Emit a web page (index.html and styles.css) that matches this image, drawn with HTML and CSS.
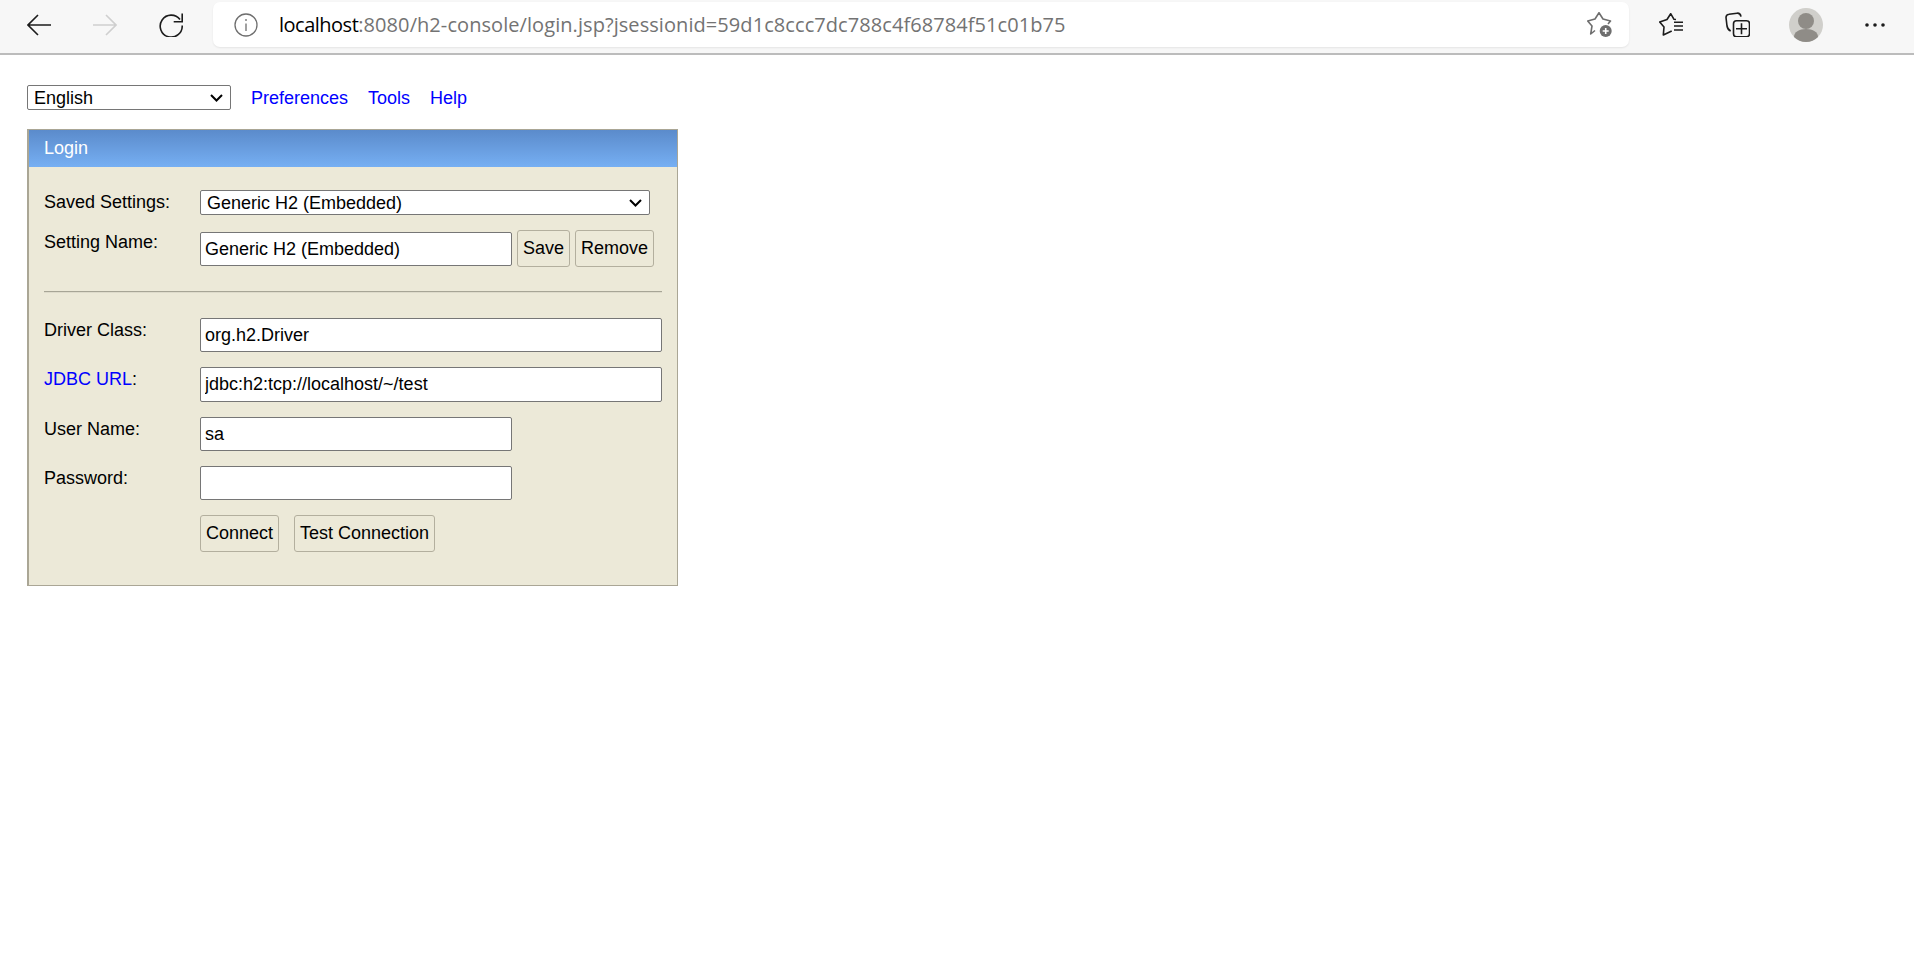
FILE: index.html
```html
<!DOCTYPE html>
<html lang="en">
<head>
<meta charset="utf-8">
<title>H2 Console</title>
<link rel="stylesheet" href="styles.css">
</head>
<body>
<header class="toolbar">
  <svg class="ico back" viewBox="0 0 24 22"><path d="M24 11H1M11 1 1 11l10 10"/></svg>
  <svg class="ico fwd" viewBox="0 0 24 22"><path d="M0 11h23M13 1l10 10-10 10"/></svg>
  <svg class="ico reload" viewBox="0 0 24 24"><path d="M21 6.500A11 11 0 1 0 23.200 12.500M23.200 .5v8.200h-8.500"/></svg>
  <div class="address">
    <svg class="info" viewBox="0 0 24 24"><circle cx="12" cy="12" r="11"/><path d="M12 10.500V18M12 6v2"/></svg>
    <span class="url"><span class="host">localhost</span>:8080/h2-console/login.jsp?jsessionid=59d1c8ccc7dc788c4f68784f51c01b75</span>
    <svg class="star-add" viewBox="0 0 26 25"><path d="M8 18.500 3.700 22 5 14 .7 9 8 7 12 .7 16 7l7.500 2-2.500 3"/><circle class="fill" cx="18.700" cy="19" r="6"/><path class="plus" d="M18.700 16v6M15.700 19h6"/></svg>
  </div>
  <svg class="ico fav" viewBox="0 0 25 24"><path class="join" d="M17 6.500 15 6.300 11.700 .7 8 6.500 .7 9 5 14 4.300 22 12.700 18M15 9.300h9M15 13h9M15 17h9"/></svg>
  <svg class="ico coll" viewBox="0 0 25 25"><path d="M5.700 19C3.500 18 2.500 17 2 14L1 5.500C1 3.500 2 2.500 4 2.300L12 1.200C14 1 15.500 2 16 4.700"/><rect x="8.500" y="8.700" width="16" height="16" rx="3"/><path d="M16.500 11.200v11M11 16.700h11"/></svg>
  <svg class="avatar" viewBox="0 0 34 34"><circle class="av-bg" cx="17" cy="17" r="17"/><circle class="av-fg" cx="17" cy="13" r="8"/><path class="av-fg" d="M5 29C5 24 10 21 17 21S29 24 29 29A17 17 0 0 1 5 29z"/></svg>
  <svg class="dots" viewBox="0 0 20 4"><circle cx="2" cy="2" r="1.800"/><circle cx="10" cy="2" r="1.800"/><circle cx="18" cy="2" r="1.800"/></svg>
</header>

<main class="page">
  <nav class="topnav">
    <select class="lang"><option>English</option></select>
    <a href="#">Preferences</a>
    <a href="#">Tools</a>
    <a href="#">Help</a>
  </nav>

  <section class="panel">
    <h1 class="panel-title">Login</h1>
    <div class="panel-body">
      <div class="row row-saved">
        <label class="lbl">Saved Settings:</label>
        <select class="saved"><option>Generic H2 (Embedded)</option></select>
      </div>
      <div class="row row-name">
        <label class="lbl">Setting Name:</label>
        <input class="field short name-input" value="Generic H2 (Embedded)">
        <button class="btn btn-save">Save</button>
        <button class="btn btn-remove">Remove</button>
      </div>
      <hr class="rule">
      <div class="row row-driver">
        <label class="lbl">Driver Class:</label>
        <input class="field wide" value="org.h2.Driver">
      </div>
      <div class="row row-next">
        <label class="lbl"><a href="#">JDBC URL</a>:</label>
        <input class="field wide tall" value="jdbc:h2:tcp://localhost/~/test">
      </div>
      <div class="row row-next">
        <label class="lbl">User Name:</label>
        <input class="field short" value="sa">
      </div>
      <div class="row row-next">
        <label class="lbl">Password:</label>
        <input class="field short" type="password">
      </div>
      <div class="row row-next">
        <span class="lbl"></span>
        <button class="btn">Connect</button>
        <button class="btn btn-test">Test Connection</button>
      </div>
    </div>
  </section>
</main>
</body>
</html>
```
FILE: styles.css
```css
* { box-sizing: border-box; }
html, body { margin: 0; padding: 0; background: #fff; }
body { font-family: "Liberation Sans", Arial, sans-serif; font-size: 18px; color: #000; height: 966px; overflow: hidden; }

.toolbar { display: flex; align-items: center; height: 55px; padding: 2px 0 6px 27px; background: #f7f7f7; border-bottom: 2px solid #bcbcbc; }
.ico { fill: none; stroke: #1c1c1c; stroke-width: 1.6; display: block; flex: none; }
.back { width: 24px; height: 22px; }
.fwd { width: 24px; height: 22px; margin-left: 42px; stroke: #cfcfcf; }
.reload { width: 24px; height: 24px; margin-left: 42px; }
.address { display: flex; align-items: center; width: 1416px; height: 45px; margin-left: 30px; padding: 0 16px 0 21px; background: #fff; border-radius: 7px; box-shadow: 0 1px 2px rgba(0,0,0,.08); }
.info { width: 24px; height: 24px; fill: none; stroke: #6e6e6e; stroke-width: 1.3; flex: none; }
.url { margin-left: 21px; font-family: "Open Sans", "Noto Sans", sans-serif; font-size: 20px; color: #737373; white-space: nowrap; flex: 1; letter-spacing: .07px; }
.host { color: #000; letter-spacing: -.5px; }
.star-add { width: 26px; height: 25px; flex: none; fill: none; stroke: #6e6e6e; stroke-width: 1.6; stroke-linejoin: round; }
.star-add .fill { fill: #6e6e6e; stroke: none; }
.star-add .plus { stroke: #fff; stroke-width: 1.6; }
.fav { width: 25px; height: 24px; margin-left: 30px; }
.join { stroke-linejoin: round; }
.coll { width: 25px; height: 25px; margin-left: 41px; }
.avatar { width: 34px; height: 34px; margin-left: 39px; flex: none; }
.av-bg { fill: #d0cfcb; }
.av-fg { fill: #8f8c87; }
.dots { width: 20px; height: 4px; margin-left: 42px; flex: none; fill: #1c1c1c; }

.page { padding: 30px 0 0 27px; }
.topnav { display: flex; align-items: center; height: 25px; }
.topnav a { margin-left: 20px; padding-top: 1px; }
a { color: #0000ff; text-decoration: none; }
select {
  font: inherit; color: #000; height: 25px; padding: 0 24px 0 6px;
  border: 1px solid #767676; border-radius: 2px;
  appearance: none; -webkit-appearance: none;
  background: #fff url("data:image/svg+xml,%3Csvg xmlns='http://www.w3.org/2000/svg' width='13' height='8' viewBox='0 0 13 8'%3E%3Cpath d='M1 1l5.500 5.500L12 1' fill='none' stroke='%23000' stroke-width='2'/%3E%3C/svg%3E") no-repeat right 7px center;
}
.lang { width: 204px; }
.saved { width: 450px; }

.panel { width: 651px; height: 457px; margin-top: 19px; background: #ece9d8; border: 1px solid #aaa695; border-left-width: 2px; }
.panel-title { margin: 0; height: 37px; padding-left: 15px; font-size: 18px; font-weight: normal; line-height: 37px; color: #fff; background: linear-gradient(#5b8bcb, #76aff3); }
.panel-body { padding: 23px 0 0 15px; }
.row { display: flex; align-items: flex-start; }
.lbl { flex: none; display: block; width: 156px; padding-top: 2px; line-height: 20px; }
.row-name { margin-top: 15px; }
.row-driver { margin-top: 25px; }
.row-next { margin-top: 15px; }
.field { font: inherit; height: 34px; padding: 0 4px; color: #000; background: #fff; border: 1px solid #767676; border-radius: 2px; outline: none; }
.short { width: 312px; }
.wide { width: 462px; }
.tall { height: 35px; }
.name-input { margin-top: 2px; }
.btn { font: inherit; height: 37px; padding: 0 5px; color: #000; background: #ece9d8; border: 1px solid #b3af9e; border-radius: 3px; }
.btn-save { margin-left: 5px; }
.btn-remove { margin-left: 5px; }
.btn-test { margin-left: 15px; }
.rule { height: 2px; margin: 24px 0 0 0; width: 618px; border: 0; border-top: 1px solid #a7a596; border-bottom: 1px solid #dedbcb; }
```
